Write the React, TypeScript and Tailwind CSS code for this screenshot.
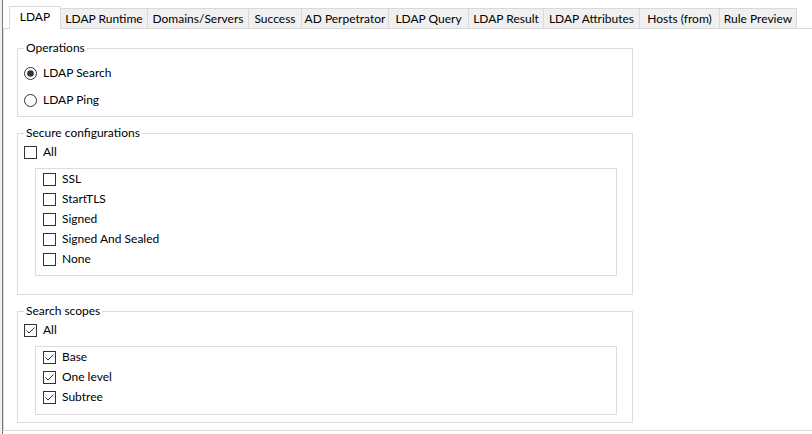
import React from "react";

type TabItem = { label: string; width: string; active?: boolean };

const tabs: TabItem[] = [
  { label: "LDAP", width: "w-[52px]", active: true },
  { label: "LDAP Runtime", width: "w-[87px]" },
  { label: "Domains/Servers", width: "w-[101px]" },
  { label: "Success", width: "w-[53px]" },
  { label: "AD Perpetrator", width: "w-[87px]" },
  { label: "LDAP Query", width: "w-[80px]" },
  { label: "LDAP Result", width: "w-[75px]" },
  { label: "LDAP Attributes", width: "w-[96px]" },
  { label: "Hosts (from)", width: "w-[80px]" },
  { label: "Rule Preview", width: "w-[77px]" },
];

const secureItems = ["SSL", "StartTLS", "Signed", "Signed And Sealed", "None"];
const scopeItems = ["Base", "One level", "Subtree"];

const CheckBox = ({ checked }: { checked?: boolean }) => (
  <svg width="13" height="13" viewBox="0 0 13 13" className="shrink-0">
    <rect x="0.5" y="0.5" width="12" height="12" fill="#fff" stroke="#333" />
    {checked && (
      <polyline
        points="2.5,6.5 5,9 10.5,3.5"
        fill="none"
        stroke="#333"
        strokeWidth="1"
      />
    )}
  </svg>
);

const Radio = ({ checked }: { checked?: boolean }) => (
  <svg width="13" height="13" viewBox="0 0 13 13" className="shrink-0">
    <circle cx="6.5" cy="6.5" r="6" fill="#fff" stroke="#333" />
    {checked && <circle cx="6.5" cy="6.5" r="3.3" fill="#333" />}
  </svg>
);

const Option = ({
  label,
  control,
}: {
  label: string;
  control: React.ReactNode;
}) => (
  <div className="flex h-[20px] items-center gap-[6px]">
    {control}
    <span>{label}</span>
  </div>
);

const GroupBox = ({
  title,
  className,
  children,
}: {
  title: string;
  className: string;
  children: React.ReactNode;
}) => (
  <fieldset className={`w-[616px] border border-[#dcdcdc] ${className}`}>
    <legend className="ml-[6px] px-[2px] leading-[16px]">{title}</legend>
    {children}
  </fieldset>
);

export default function App() {
  return (
    <div className="flex h-[434px] w-[812px] overflow-hidden bg-white font-['Lato','Noto_Sans',sans-serif] text-[12px] text-black">
      <div className="w-[2px] bg-[#f0f0f0]" />
      <div className="w-px bg-[#7a7a7a]" />
      <div className="flex flex-1 flex-col">
        {/* tab strip */}
        <div className="flex h-[28px] items-end pl-[6px]">
          {tabs.map((tab) =>
            tab.active ? (
              <div
                key={tab.label}
                className={`relative z-10 -mb-px flex h-[23px] items-center justify-center border-x border-t border-[#d9d9d9] bg-white pb-[2px] ${tab.width}`}
              >
                {tab.label}
              </div>
            ) : (
              <div
                key={tab.label}
                className={`flex h-[20px] items-center justify-center whitespace-nowrap border-r border-t border-[#d9d9d9] bg-[#f0f0f0] ${tab.width}`}
              >
                {tab.label}
              </div>
            )
          )}
        </div>

        {/* tab page */}
        <div className="flex h-[403px] flex-col border-y border-l border-[#d9d9d9] bg-white pl-[13px]">
          <GroupBox title="Operations" className="mt-[11px]">
            <div className="flex flex-col gap-[7px] pb-[6px] pl-[6px] pt-[7px]">
              <Option label="LDAP Search" control={<Radio checked />} />
              <Option label="LDAP Ping" control={<Radio />} />
            </div>
          </GroupBox>

          <GroupBox title="Secure configurations" className="mt-[8px]">
            <div className="pl-[6px] pt-[1px]">
              <Option label="All" control={<CheckBox />} />
            </div>
            <div className="mb-[18px] ml-[17px] mr-[15px] mt-[6px] flex flex-col border border-[#dcdcdc] pb-[6px] pl-[7px]">
              {secureItems.map((item) => (
                <Option key={item} label={item} control={<CheckBox />} />
              ))}
            </div>
          </GroupBox>

          <GroupBox title="Search scopes" className="mt-[8px]">
            <div className="pl-[6px] pt-[1px]">
              <Option label="All" control={<CheckBox checked />} />
            </div>
            <div className="mb-[7px] ml-[17px] mr-[15px] mt-[6px] flex flex-col border border-[#dcdcdc] pb-[7px] pl-[7px]">
              {scopeItems.map((item) => (
                <Option key={item} label={item} control={<CheckBox checked />} />
              ))}
            </div>
          </GroupBox>
        </div>
      </div>
    </div>
  );
}
